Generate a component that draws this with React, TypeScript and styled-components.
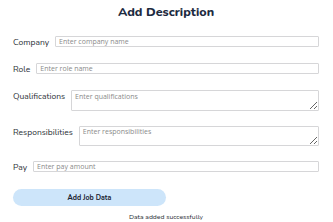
import React from "react";
import styled, { createGlobalStyle } from "styled-components";

const Global = createGlobalStyle`
  html, body { margin: 0; padding: 0; background: #ffffff; }
  body { font-family: "Nunito", "Open Sans", "Noto Sans", sans-serif; }
  * { box-sizing: border-box; }
`;

const Page = styled.div`
  width: 333px;
  padding: 4px 14px 0 13px;
`;

const Title = styled.h1`
  margin: 0 0 17px 0;
  text-align: center;
  font-size: 12.5px;
  line-height: 15px;
  font-weight: 800;
  color: #1d2b3f;
`;

const Form = styled.form`
  display: flex;
  flex-direction: column;
  gap: 15px;
`;

const Row = styled.div`
  display: flex;
  align-items: flex-start;
  gap: 6px;
`;

const Label = styled.label`
  padding-top: 1px;
  font-size: 8.5px;
  line-height: 11px;
  color: #2b2f36;
  white-space: nowrap;
`;

const fieldStyles = `
  flex: 1;
  min-width: 0;
  margin: 0;
  border: 1px solid #d6d6d8;
  border-radius: 1px;
  font-family: "Open Sans", "Noto Sans", sans-serif;
  font-size: 7px;
  color: #333;
  padding: 0 3px;
  outline: none;
  background: #fff;
  &::placeholder { color: #8a8a8a; }
`;

const Input = styled.input`
  ${fieldStyles}
  display: block;
  height: 11px;
  line-height: 9px;
`;

const TextArea = styled.textarea`
  ${fieldStyles}
  display: block;
  height: 20.5px;
  padding-top: 1.5px;
  line-height: 8px;
  resize: vertical;
`;

const Button = styled.button`
  display: block;
  margin-top: 1px;
  width: 153px;
  height: 17px;
  border: none;
  border-radius: 9px;
  background: #cde5fa;
  color: #1a2230;
  font-family: "Nunito", "Open Sans", sans-serif;
  font-size: 7px;
  font-weight: 700;
  cursor: pointer;
`;

const Message = styled.p`
  margin: 6px 0 0 0;
  text-align: center;
  font-size: 6.8px;
  line-height: 9px;
  color: #2b2f36;
`;

export default function App() {
  return (
    <>
      <Global />
      <Page>
        <Title>Add Description</Title>
        <Form onSubmit={(e) => e.preventDefault()}>
          <Row>
            <Label>Company</Label>
            <Input placeholder="Enter company name" />
          </Row>
          <Row>
            <Label>Role</Label>
            <Input placeholder="Enter role name" />
          </Row>
          <Row>
            <Label>Qualifications</Label>
            <TextArea placeholder="Enter qualifications" />
          </Row>
          <Row>
            <Label>Responsibilities</Label>
            <TextArea placeholder="Enter responsibilities" />
          </Row>
          <Row>
            <Label>Pay</Label>
            <Input placeholder="Enter pay amount" />
          </Row>
          <Button type="submit">Add Job Data</Button>
        </Form>
        <Message>Data added successfully</Message>
      </Page>
    </>
  );
}
